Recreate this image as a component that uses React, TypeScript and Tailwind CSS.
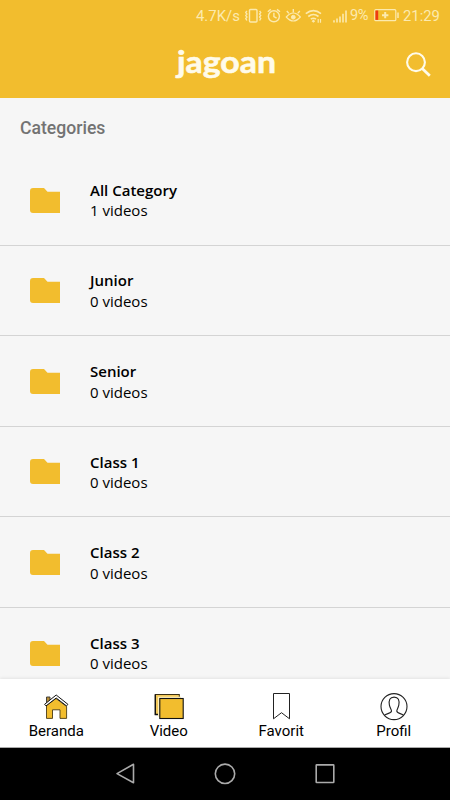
import type { ReactNode } from "react";

const CATEGORIES = [
  { name: "All Category", count: 1 },
  { name: "Junior", count: 0 },
  { name: "Senior", count: 0 },
  { name: "Class 1", count: 0 },
  { name: "Class 2", count: 0 },
  { name: "Class 3", count: 0 },
];

const TABS: { label: string; icon: ReactNode }[] = [
  { label: "Beranda", icon: <HomeIcon /> },
  { label: "Video", icon: <VideoIcon /> },
  { label: "Favorit", icon: <BookmarkIcon /> },
  { label: "Profil", icon: <ProfileIcon /> },
];

function HomeIcon() {
  return (
    <svg width="28" height="28" viewBox="0 0 28 28" strokeWidth="0.9">
      <path d="M4.5 11V4H8V9" fill="#b98f35" stroke="#333" />
      <path d="M4.5 12.5L14 5.5L24.6 13.5V25.4H18V16.8H10.5V25.4H4.5V12.5Z" fill="#f2bd2e" stroke="#4a3b16" />
      <path d="M2.6 11.3L14.2 2L25.9 11.3L24.5 12.9L14.2 5L4 12.9Z" fill="#fff" stroke="#111" strokeWidth="1" />
    </svg>
  );
}

function VideoIcon() {
  return (
    <svg width="30" height="28" viewBox="0 0 30 28">
      <rect x="1.3" y="1.5" width="24" height="20" fill="#f2c85a" stroke="#3b2f12" strokeWidth="1" />
      <path d="M1.3 1.5V21.5H4" fill="none" stroke="#111" strokeWidth="1.3" />
      <rect x="4" y="3.7" width="23" height="20" fill="#fff0b8" />
      <rect x="5.8" y="5.5" width="23.4" height="20" fill="#f2bd2e" stroke="#111" strokeWidth="1.1" />
    </svg>
  );
}

function BookmarkIcon() {
  return (
    <svg width="28" height="28" viewBox="0 0 28 28" fill="none" stroke="#222" strokeWidth="1">
      <path d="M6.5 0.5H22.5V25.8L14.5 19.7L6.5 25.8Z" />
    </svg>
  );
}

function ProfileIcon() {
  return (
    <svg width="28" height="28" viewBox="0 0 28 28" fill="none" stroke="#222" strokeWidth="1.1">
      <circle cx="14" cy="13.6" r="13" />
      <path d="M4.5 22.4C6 20.4 11.5 20.6 11.5 18C11.5 16.5 10 15.1 9.4 12.1C8.6 7.4 9.7 4.1 14.1 4.1C18.5 4.1 19.6 7.4 18.8 12.1C18.2 15.1 16.8 16.5 16.8 18C16.8 20.6 22 20.4 23.5 22.4" />
    </svg>
  );
}

function FolderIcon() {
  return (
    <svg width="30" height="25" viewBox="0 0 30 25" fill="#f2bd2e">
      <path d="M3 0H14L17.5 3.8H30V25H3Q0 25 0 22V3Q0 0 3 0Z" />
    </svg>
  );
}

function StatusIcons() {
  return (
    <svg width="82" height="18" viewBox="0 0 82 18" fill="none" stroke="#fceaae" strokeWidth="1.4">
      {/* vibrate */}
      <rect x="5.5" y="2.5" width="7.5" height="12.5" rx="1" />
      <path d="M2.9 4L1.8 5.5L2.9 7L1.8 8.5L2.9 10L1.8 11.5L2.9 13.5M15.6 4L16.7 5.5L15.6 7L16.7 8.5L15.6 10L16.7 11.5L15.6 13.5" />
      {/* alarm */}
      <circle cx="29.9" cy="9.3" r="5.5" />
      <path d="M29.9 5.8V9.5L32.6 11.1M23.8 4.8L26.8 2.4M33 2.4L36 4.8" />
      {/* eye comfort */}
      <path d="M42.3 10Q49.3 2 56.3 10Q49.3 18 42.3 10Z" strokeWidth="1.2" />
      <circle cx="49.3" cy="10.2" r="1.9" fill="#fceaae" strokeWidth="1" />
      <path d="M49.3 5.6V2M44.9 6.4L42.8 4M53.7 6.4L55.8 4" />
      {/* wifi */}
      <path d="M61.8 6.7Q69.4 .5 77 6.7M64.3 9.5Q69.4 5.5 74.5 9.5M66.8 12.2Q69.4 10.2 72 12.2" strokeWidth="1.6" />
      <path d="M69.4 12.6L67.6 14.2L69.4 15.8L71.2 14.2Z" fill="#fceaae" stroke="none" />
      <path d="M74.2 11.9V15.7M76.5 11.9V15.7" strokeWidth="1.2" />
    </svg>
  );
}

function StatusBar() {
  return (
    <div className="flex h-8 items-center justify-end pr-[10px] font-['Roboto',sans-serif] text-[14.8px] leading-none text-[#fceaae]">
      <span className="w-[48px] whitespace-nowrap text-[14.9px]">4.7K/s</span>
      <StatusIcons />
      <svg width="18" height="18" viewBox="0 0 18 18" stroke="#fceaae" strokeWidth="1.6" className="ml-[6px]">
        <path d="M2 15.5V13.2M5 15.5V11.6M8 15.5V9.4M11 15.5V6.8M14 15.5V3.6" />
      </svg>
      <span className="w-[22px] whitespace-nowrap pb-0.5 text-[14.6px] tracking-[-0.5px]">9%</span>
      <svg width="26" height="18" viewBox="0 0 26 18" className="ml-[2px]">
        <rect x="0.8" y="2.7" width="21" height="11" rx="1" fill="none" stroke="#fceaae" strokeWidth="1.2" />
        <path d="M1.4 3.5H4.2V12.9H1.4Z" fill="#ee3b12" />
        <path d="M11.2 5.1V11.3M8 8.2H14.4" stroke="#fceaae" strokeWidth="2" />
        <path d="M24 5.5V11" stroke="#fceaae" strokeWidth="1.5" />
      </svg>
      <span className="ml-[3px] w-[37px] whitespace-nowrap">21:29</span>
    </div>
  );
}

function Header() {
  return (
    <header className="h-[98px] shrink-0 bg-[#f2bd2e]">
      <StatusBar />
      <div className="grid h-[66px] grid-cols-[1fr_104px_1fr] items-start">
        <span />
        <svg width="104" height="56" viewBox="0 0 104 56">
          <text
            x="4"
            y="40.5"
            textLength="99"
            lengthAdjust="spacingAndGlyphs"
            fill="#fffbea"
            stroke="#fffbea"
            strokeWidth="0.6"
            className="font-['Lato',sans-serif] text-[31px] font-bold"
          >
            jagoan
          </text>
        </svg>
        <svg width="28" height="28" viewBox="0 0 28 28" fill="none" stroke="#fffbea" className="mt-[18px] mr-[18px] justify-self-end">
          <circle cx="12" cy="12.2" r="8.9" strokeWidth="2.1" />
          <path d="M18.2 18.4L25.8 25.7" strokeWidth="2.8" />
        </svg>
      </div>
    </header>
  );
}

function CategoryRow({ name, count }: { name: string; count: number }) {
  return (
    <li className="flex h-[90.6px] shrink-0 items-center border-b border-[#d4d4d4] pt-[0.8px] pl-[30px]">
      <FolderIcon />
      <div className="ml-[30px] pt-[0.4px] font-['Open_Sans','Noto_Sans',sans-serif] text-[15px] leading-[20.5px] text-black">
        <p className="font-semibold">{name}</p>
        <p>{count} videos</p>
      </div>
    </li>
  );
}

export default function App() {
  return (
    <div className="flex h-[800px] w-[450px] flex-col overflow-hidden bg-[#f6f6f6]">
      <Header />
      <main className="flex h-[581px] shrink-0 flex-col overflow-hidden">
        <h1 className="h-[57px] shrink-0 pt-[18px] pl-5 font-['Roboto',sans-serif] text-[17.6px] leading-6 font-medium text-[#737373]">
          Categories
        </h1>
        <ul className="flex flex-col">
          {CATEGORIES.map((c) => (
            <CategoryRow key={c.name} name={c.name} count={c.count} />
          ))}
        </ul>
      </main>
      <nav className="z-10 grid h-[69px] shrink-0 grid-cols-4 border-b border-[#aaa] bg-white shadow-[0_-1px_3px_rgba(0,0,0,0.08)]">
        {TABS.map(({ label, icon }) => (
          <div key={label} className="flex flex-col items-center pt-[14px]">
            {icon}
            <span className="font-['Roboto',sans-serif] text-[15px] leading-5 text-black">{label}</span>
          </div>
        ))}
      </nav>
      <div className="flex h-[52px] shrink-0 items-center justify-center gap-[76px] bg-black">
        <svg width="24" height="24" viewBox="0 0 24 24" fill="none" stroke="#aaa" strokeWidth="1.6" strokeLinejoin="round">
          <path d="M20.5 2.3V20.8L4 11.6Z" />
        </svg>
        <svg width="24" height="24" viewBox="0 0 24 24" fill="none" stroke="#aaa" strokeWidth="1.6">
          <circle cx="12" cy="11.8" r="9.7" />
        </svg>
        <svg width="24" height="24" viewBox="0 0 24 24" fill="none" stroke="#aaa" strokeWidth="1.6">
          <rect x="3.2" y="2.9" width="17.6" height="17.6" rx="0.5" />
        </svg>
      </div>
    </div>
  );
}
